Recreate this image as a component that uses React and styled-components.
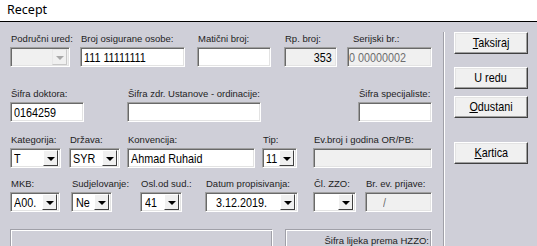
import React from "react";
import styled, { createGlobalStyle } from "styled-components";

const GlobalStyle = createGlobalStyle`
  html, body {
    margin: 0;
    padding: 0;
    background: #ffffff;
  }
`;

const Window = styled.div`
  width: 537px;
  height: 246px;
  overflow: hidden;
  display: flex;
  flex-direction: column;
  background: #cfcfd8;
  font-family: "Liberation Sans", Arial, sans-serif;
`;

const TitleBar = styled.div`
  height: 22px;
  flex: 0 0 22px;
  box-sizing: border-box;
  background: #ffffff;
  border-bottom: 1px solid #000000;
  padding-left: 7px;
  font-family: "Noto Sans", "Open Sans", sans-serif;
  font-size: 12.5px;
  line-height: 20px;
  color: #000;
`;

const Body = styled.div`
  flex: 1;
  display: flex;
`;

const Main = styled.div`
  flex: 0 0 443px;
  box-sizing: border-box;
  padding: 10px 0 0 10px;
  display: flex;
  flex-direction: column;
`;

const Row = styled.div`
  display: flex;
  align-items: flex-start;
  margin-top: ${(p) => p.$mt || 0}px;
`;

const Field = styled.div`
  display: flex;
  flex-direction: column;
  width: ${(p) => p.$w}px;
  margin-left: ${(p) => p.$ml || 0}px;
`;

const Label = styled.div`
  height: 13px;
  padding-top: 1px;
  box-sizing: border-box;
  margin-bottom: 2px;
  font-size: 9.5px;
  line-height: 12px;
  color: #1e1e1e;
  white-space: nowrap;
  text-align: ${(p) => (p.$right ? "right" : "left")};
  padding-left: ${(p) => p.$indent || 1}px;
  padding-right: ${(p) => p.$pr || 0}px;
`;

/* the reference uses a narrow system font, approximated by squeezing Arial */
const Narrow = styled.span`
  display: inline-block;
  font-size: 13px;
  transform: scaleX(0.83);
  transform-origin: ${(p) => p.$origin || "left"} center;
`;

const sunken = `
  box-sizing: border-box;
  height: 20px;
  border: 1px solid;
  border-color: #a0a0a0 #ffffff #ffffff #a0a0a0;
  box-shadow: inset 1px 1px 0 #696969, inset -1px -1px 0 #e3e3e3;
`;

const TextBox = styled.div`
  ${sunken}
  width: 100%;
  background: ${(p) => (p.$disabled ? "#f0f0f0" : "#ffffff")};
  color: ${(p) => (p.$disabled && !p.$dark ? "#6d6d6d" : "#000")};
  line-height: 18px;
  white-space: nowrap;
  overflow: hidden;
  text-align: ${(p) => (p.$right ? "right" : "left")};
  padding: 0 ${(p) => (p.$right ? 4 : 0)}px 0 ${(p) => p.$pl || 3}px;
`;

const Combo = styled.div`
  ${sunken}
  width: 100%;
  display: flex;
  align-items: center;
  padding: 2px;
  background: ${(p) => (p.$disabled ? "#f0f0f0" : "#ffffff")};
`;

const ComboText = styled.div`
  flex: 1;
  padding-left: ${(p) => p.$pl || 1}px;
  line-height: 16px;
  color: #000;
  white-space: nowrap;
  overflow: hidden;
`;

const ArrowBtn = styled.div`
  flex: 0 0 15px;
  height: 16px;
  box-sizing: border-box;
  background: #f0f0f0;
  border-left: 1px solid ${(p) => (p.$disabled ? "#e8e8e8" : "#ffffff")};
  border-top: 1px solid ${(p) => (p.$disabled ? "#e8e8e8" : "#ffffff")};
  border-right: 1px solid ${(p) => (p.$disabled ? "#c8c8c8" : "#404040")};
  border-bottom: 1px solid ${(p) => (p.$disabled ? "#c8c8c8" : "#404040")};
  display: flex;
  align-items: center;
  justify-content: center;
`;

const Arrow = styled.div`
  width: 0;
  height: 0;
  margin-top: 1px;
  border-left: 4px solid transparent;
  border-right: 4px solid transparent;
  border-top: 4px solid ${(p) => (p.$disabled ? "#a8a8a8" : "#000")};
`;

const Divider = styled.div`
  flex: 0 0 2px;
  margin-top: 10px;
  border-left: 1px solid #a0a0a8;
  border-right: 1px solid #ffffff;
  box-sizing: border-box;
`;

const Side = styled.div`
  display: flex;
  flex-direction: column;
  padding: 10px 0 0 9px;
`;

const Button = styled.button`
  width: 74px;
  height: 22px;
  margin: ${(p) => p.$mt || 0}px 0 0 0;
  padding: 0;
  box-sizing: border-box;
  background: #f0f0f0;
  border: 1px solid;
  border-color: #ffffff #404040 #404040 #ffffff;
  box-shadow: inset -1px -1px 0 #a0a0a0, inset 1px 1px 0 #e3e3e3;
  font-family: "Liberation Sans", Arial, sans-serif;
  line-height: 18px;
  color: #000;
`;

const Key = styled.span`
  text-decoration: underline;
`;

const GroupBox = styled.div`
  box-sizing: border-box;
  width: ${(p) => p.$w}px;
  height: 40px;
  margin-left: ${(p) => p.$ml || 0}px;
  border: 1px solid;
  border-color: #a0a0a8 #ffffff #ffffff #a0a0a8;
  box-shadow: inset 1px 1px 0 #ffffff, inset -1px -1px 0 #a0a0a8;
  padding: 5px 0 0 0;
`;

const GroupLabel = styled.div`
  font-size: 9.5px;
  line-height: 11px;
  color: #1e1e1e;
  text-align: right;
  padding-right: 2px;
`;

const ComboBox = ({ value, disabled, pl }) => (
  <Combo $disabled={disabled}>
    <ComboText $pl={pl}>
      <Narrow>{value}</Narrow>
    </ComboText>
    <ArrowBtn $disabled={disabled}>
      <Arrow $disabled={disabled} />
    </ArrowBtn>
  </Combo>
);

const Input = ({ value, right, ...rest }) => (
  <TextBox $right={right} {...rest}>
    <Narrow $origin={right ? "right" : "left"}>{value}</Narrow>
  </TextBox>
);

export default function App() {
  return (
    <>
      <GlobalStyle />
      <Window>
        <TitleBar>Recept</TitleBar>
        <Body>
          <Main>
            <Row>
              <Field $w={60}>
                <Label>Područni ured:</Label>
                <ComboBox value="" disabled />
              </Field>
              <Field $w={105} $ml={10}>
                <Label>Broj osigurane osobe:</Label>
                <Input value="111 11111111" />
              </Field>
              <Field $w={74} $ml={12}>
                <Label>Matični broj:</Label>
                <Input value="" />
              </Field>
              <Field $w={53} $ml={13}>
                <Label>Rp. broj:</Label>
                <Input value="353" $disabled $dark right />
              </Field>
              <Field $w={85} $ml={10}>
                <Label $indent={6}>Serijski br.:</Label>
                <Input value="0 00000002" $disabled $pl={1} />
              </Field>
            </Row>

            <Row $mt={20}>
              <Field $w={74}>
                <Label>Šifra doktora:</Label>
                <Input value="0164259" />
              </Field>
              <Field $w={134} $ml={43}>
                <Label>Šifra zdr. Ustanove - ordinacije:</Label>
                <Input value="" />
              </Field>
              <Field $w={74} $ml={97}>
                <Label $right $pr={4}>Šifra specijaliste:</Label>
                <Input value="" />
              </Field>
            </Row>

            <Row $mt={11}>
              <Field $w={51}>
                <Label>Kategorija:</Label>
                <ComboBox value="T" />
              </Field>
              <Field $w={51} $ml={8}>
                <Label>Država:</Label>
                <ComboBox value="SYR" />
              </Field>
              <Field $w={128} $ml={7}>
                <Label>Konvencija:</Label>
                <Input value="Ahmad Ruhaid" />
              </Field>
              <Field $w={35} $ml={7}>
                <Label>Tip:</Label>
                <ComboBox value="11" />
              </Field>
              <Field $w={119} $ml={16}>
                <Label>Ev.broj i godina OR/PB:</Label>
                <Input value="" $disabled />
              </Field>
            </Row>

            <Row $mt={9}>
              <Field $w={50}>
                <Label>MKB:</Label>
                <ComboBox value="A00." />
              </Field>
              <Field $w={41} $ml={11}>
                <Label>Sudjelovanje:</Label>
                <ComboBox value="Ne" pl={2} />
              </Field>
              <Field $w={42} $ml={28}>
                <Label>Osl.od sud.:</Label>
                <ComboBox value="41" pl={2} />
              </Field>
              <Field $w={93} $ml={23}>
                <Label>Datum propisivanja:</Label>
                <ComboBox value="3.12.2019." pl={8} />
              </Field>
              <Field $w={43} $ml={15}>
                <Label>Čl. ZZO:</Label>
                <ComboBox value="" />
              </Field>
              <Field $w={67} $ml={9}>
                <Label>Br. ev. prijave:</Label>
                <Input value="/" $disabled $pl={17} />
              </Field>
            </Row>

            <Row $mt={17}>
              <GroupBox $w={263} />
              <GroupBox $w={147} $ml={12}>
                <GroupLabel>Šifra lijeka prema HZZO:</GroupLabel>
              </GroupBox>
            </Row>
          </Main>
          <Divider />
          <Side>
            <Button>
              <Narrow $origin="center">
                <Key>T</Key>aksiraj
              </Narrow>
            </Button>
            <Button $mt={13}>
              <Narrow $origin="center">U redu</Narrow>
            </Button>
            <Button $mt={7}>
              <Narrow $origin="center">
                <Key>O</Key>dustani
              </Narrow>
            </Button>
            <Button $mt={24}>
              <Narrow $origin="center">
                <Key>K</Key>artica
              </Narrow>
            </Button>
          </Side>
        </Body>
      </Window>
    </>
  );
}
